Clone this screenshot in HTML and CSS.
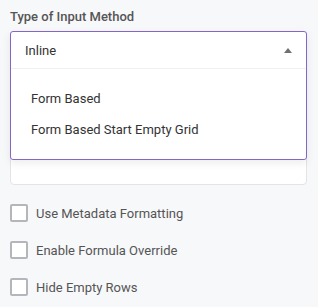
FILE: index.html
```html
<!DOCTYPE html>
<html lang="en">
<head>
    <meta charset="UTF-8">
    <title>Input Method</title>
    <link rel="stylesheet" href="styles.css">
</head>
<body>
    <div class="panel">
        <div class="field-label">Type of Input Method</div>

        <div class="select-area">
            <div class="field-box"></div>

            <!-- открытое меню поверх поля -->
            <div class="menu">
                <div class="menu-head">
                    <span>Inline</span>
                    <span class="caret"></span>
                </div>
                <ul class="menu-list">
                    <li>Form Based</li>
                    <li>Form Based Start Empty Grid</li>
                </ul>
            </div>
        </div>

        <div class="checks">
            <label class="check"><span class="box"></span>Use Metadata Formatting</label>
            <label class="check"><span class="box"></span>Enable Formula Override</label>
            <label class="check"><span class="box"></span>Hide Empty Rows</label>
        </div>
    </div>
</body>
</html>
```

FILE: styles.css
```css
body {
    margin: 0;
    padding: 0;
    background-color: #f7f8fa;
    font-family: Roboto, "Liberation Sans", sans-serif;
    font-size: 13px;
    color: #333;
}

.panel {
    padding: 9px 11px 0 10px;
}

.field-label {
    font-weight: 500;
    color: #555;
    line-height: 15px;
    margin-bottom: 7px;
}

.select-area {
    position: relative;
}

.field-box {
    height: 152px;
    background-color: #fff;
    border: 1px solid #e3e4e8;
    border-radius: 4px;
}

.menu {
    position: absolute;
    top: 0;
    left: 0;
    right: 0;
    height: 127px;
    background-color: #fff;
    border: 1px solid #8666c4;
    border-radius: 3px;
    box-shadow: 0 3px 8px rgba(0, 0, 0, 0.08);
}

.menu-head {
    display: flex;
    align-items: center;
    justify-content: space-between;
    height: 36px;
    padding: 0 13px 0 14px;
    border-bottom: 1px solid #f0f0f2;
}

.caret {
    width: 0;
    height: 0;
    border-left: 4px solid transparent;
    border-right: 4px solid transparent;
    border-bottom: 5px solid #707070;
    margin-right: 1px;
}

.menu-list {
    list-style: none;
    margin: 0;
    padding: 14px 0 0 20px;
}

    .menu-list li {
        height: 31px;
        line-height: 31px;
    }

.checks {
    display: flex;
    flex-direction: column;
    gap: 19px;
    margin-top: 19px;
}

.check {
    display: flex;
    align-items: center;
    height: 18px;
    color: #555;
}

.box {
    box-sizing: border-box;
    width: 18px;
    height: 18px;
    border: 2px solid #b4b6bb;
    border-radius: 2px;
    background-color: #fff;
    margin-right: 8px;
}
```
